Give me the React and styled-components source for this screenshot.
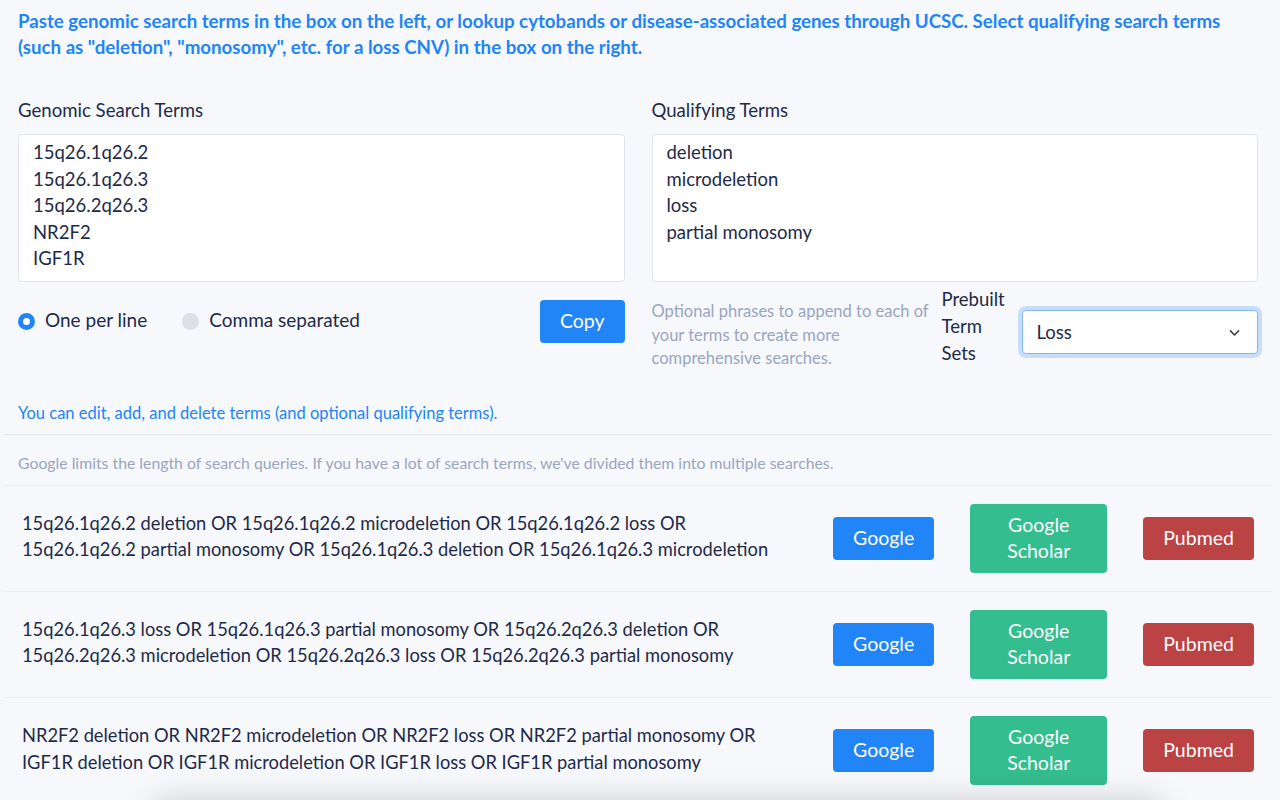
import styled, { createGlobalStyle } from "styled-components";

const GlobalStyle = createGlobalStyle`
  body {
    margin: 0;
    background: #f7f8fc;
    font-family: "Lato", "Open Sans", sans-serif;
    color: #1e2a4a;
  }
`;

const Page = styled.div`
  padding: 0 8px 0 4px;
`;

const Intro = styled.p`
  margin: 0;
  padding: 8px 14px 0;
  color: #2185f7;
  font-weight: 700;
  font-size: 18.7px;
  line-height: 26px;
`;

const Columns = styled.div`
  display: grid;
  grid-template-columns: 1fr 1fr;
  gap: 27px;
  padding: 38px 14px 0;
`;

const Column = styled.div`
  display: flex;
  flex-direction: column;
`;

const Label = styled.div`
  font-size: 18.6px;
  line-height: 24px;
  margin-bottom: 12px;
`;

const TextArea = styled.div`
  background: #fff;
  border: 1px solid #e1e4ea;
  border-radius: 4px;
  height: 148px;
  box-sizing: border-box;
  padding: 4px 14px;
  font-size: 18.5px;
  line-height: 26.5px;
`;

const Controls = styled.div`
  display: flex;
  align-items: center;
  margin-top: 18px;
  gap: 10px;
`;

const RadioLabel = styled.label`
  display: flex;
  align-items: center;
  gap: 10px;
  font-size: 19px;
  line-height: 22px;
  margin-right: 25px;
  margin-top: -3px;
`;

const Radio = styled.span`
  width: 17px;
  height: 17px;
  box-sizing: border-box;
  border-radius: 50%;
  margin-top: 2px;
  background: ${(p) => (p.$checked ? "#fff" : "#dde0e6")};
  border: ${(p) => (p.$checked ? "5px solid #2185f7" : "none")};
`;

const Button = styled.button`
  font-family: inherit;
  font-size: 19.5px;
  line-height: 26px;
  color: #fff;
  border: none;
  border-radius: 4px;
  background: ${(p) => p.$bg};
  padding: 8px 20px 9px;
  width: ${(p) => p.$width || "auto"};
  flex-shrink: 0;
`;

const Spacer = styled.div`
  flex: 1;
`;

const Help = styled.p`
  margin: 0;
  color: #9aa6bf;
  font-size: 16.5px;
  line-height: 23.5px;
  width: 280px;
`;

const PrebuiltLabel = styled.div`
  font-size: 18.5px;
  line-height: 27px;
  width: 70px;
  margin-top: -18px;
`;

const Select = styled.div`
  flex: 1;
  display: flex;
  align-items: center;
  justify-content: space-between;
  height: 44px;
  box-sizing: border-box;
  margin-top: -6px;
  padding: 0 16px 0 14px;
  background: #fff;
  border: 1px solid #86b7fe;
  border-radius: 4px;
  box-shadow: 0 0 0 4px rgba(33, 133, 247, 0.22);
  font-size: 18.5px;
`;

const Note = styled.p`
  margin: 0;
  padding: 31px 14px 10px;
  color: #2185f7;
  font-size: 16.5px;
  line-height: 22px;
`;

const Divider = styled.div`
  border-top: 1px solid #e2e5ea;
`;

const Limits = styled.p`
  margin: 0;
  padding: 17px 14px 11px;
  color: #9aa6bf;
  font-size: 15.8px;
  line-height: 22px;
  border-bottom: 1px solid #eceef3;
`;

const Row = styled.div`
  display: flex;
  align-items: center;
  gap: 36px;
  height: 106px;
  box-sizing: border-box;
  padding: 0 17px 0 18px;
  border-bottom: 1px solid #eceef3;
  &:last-child {
    border-bottom: none;
  }
`;

const Query = styled.div`
  width: 775px;
  font-size: 18.3px;
  line-height: 26.5px;
  margin-top: -4px;
`;

const Results = styled.div`
  position: relative;
  &::after {
    content: "";
    position: absolute;
    left: 150px;
    right: 110px;
    bottom: -40px;
    height: 40px;
    border-radius: 20px;
    box-shadow: 0 0 30px 6px rgba(0, 0, 0, 0.16);
  }
`;

const queries = [
  "15q26.1q26.2 deletion OR 15q26.1q26.2 microdeletion OR 15q26.1q26.2 loss OR 15q26.1q26.2 partial monosomy OR 15q26.1q26.3 deletion OR 15q26.1q26.3 microdeletion",
  "15q26.1q26.3 loss OR 15q26.1q26.3 partial monosomy OR 15q26.2q26.3 deletion OR 15q26.2q26.3 microdeletion OR 15q26.2q26.3 loss OR 15q26.2q26.3 partial monosomy",
  "NR2F2 deletion OR NR2F2 microdeletion OR NR2F2 loss OR NR2F2 partial monosomy OR IGF1R deletion OR IGF1R microdeletion OR IGF1R loss OR IGF1R partial monosomy",
];

const Chevron = () => (
  <svg width="13" height="13" viewBox="0 0 16 16" fill="none" stroke="#343a40" strokeWidth="1.8" strokeLinecap="round" strokeLinejoin="round">
    <path d="M3 6l5 5 5-5" />
  </svg>
);

const App = () => {
  return (
    <Page>
      <GlobalStyle />
      <Intro>
        Paste genomic search terms in the box on the left, or lookup cytobands or disease-associated genes through UCSC. Select qualifying search terms (such as "deletion", "monosomy", etc. for a loss CNV) in the box on the right.
      </Intro>
      <Columns>
        <Column>
          <Label>Genomic Search Terms</Label>
          <TextArea>
            15q26.1q26.2<br />15q26.1q26.3<br />15q26.2q26.3<br />NR2F2<br />IGF1R
          </TextArea>
          <Controls>
            <RadioLabel>
              <Radio $checked />
              One per line
            </RadioLabel>
            <RadioLabel>
              <Radio />
              Comma separated
            </RadioLabel>
            <Spacer />
            <Button $bg="#2185f7">Copy</Button>
          </Controls>
        </Column>
        <Column>
          <Label>Qualifying Terms</Label>
          <TextArea>
            deletion<br />microdeletion<br />loss<br />partial monosomy
          </TextArea>
          <Controls>
            <Help>Optional phrases to append to each of your terms to create more comprehensive searches.</Help>
            <PrebuiltLabel>Prebuilt Term Sets</PrebuiltLabel>
            <Select>
              Loss
              <Chevron />
            </Select>
          </Controls>
        </Column>
      </Columns>
      <Note>You can edit, add, and delete terms (and optional qualifying terms).</Note>
      <Divider />
      <Limits>Google limits the length of search queries. If you have a lot of search terms, we've divided them into multiple searches.</Limits>
      <Results>
        {queries.map((q) => (
          <Row key={q}>
            <Query>{q}</Query>
            <Button $bg="#2185f7">Google</Button>
            <Button $bg="#34bd8f" $width="137px">Google Scholar</Button>
            <Button $bg="#bc4343">Pubmed</Button>
          </Row>
        ))}
      </Results>
    </Page>
  );
};

export default App;
